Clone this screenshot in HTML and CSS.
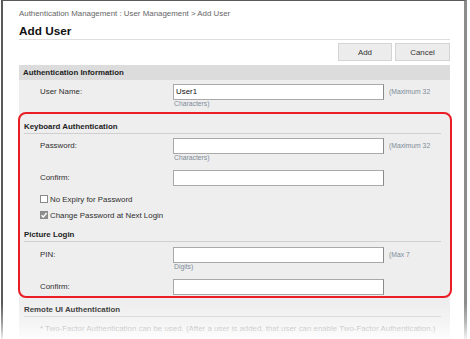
FILE: index.html
```html
<!DOCTYPE html>
<html>
<head>
<meta charset="utf-8">
<link rel="stylesheet" href="styles.css">
</head>
<body>
<div class="frame">
  <div class="page">
    <div class="crumb">Authentication Management : User Management &gt; Add User</div>
    <h1 class="title">Add User</h1>
    <div class="toolbar">
      <button class="btn btn-add">Add</button>
      <button class="btn btn-cancel">Cancel</button>
    </div>
    <div class="panel">
      <div class="bar">Authentication Information</div>
      <div class="row row-first">
        <span class="label">User Name:</span>
        <div class="field"><div class="input">User1</div><div class="sub">Characters)</div></div>
        <span class="hint">(Maximum 32</span>
      </div>
      <div class="highlight">
        <div class="subhead">Keyboard Authentication</div>
        <div class="row row-a">
          <span class="label">Password:</span>
          <div class="field"><div class="input"></div><div class="sub">Characters)</div></div>
          <span class="hint">(Maximum 32</span>
        </div>
        <div class="row row-b">
          <span class="label">Confirm:</span>
          <div class="field"><div class="input"></div></div>
        </div>
        <div class="check check-first">
          <span class="box"></span><span>No Expiry for Password</span>
        </div>
        <div class="check">
          <span class="box box-on"><svg viewBox="0 0 8 8" width="8" height="8"><path d="M1.5 4.2 L3.3 6 L6.6 2" fill="none" stroke="#fff" stroke-width="1.3"/></svg></span><span>Change Password at Next Login</span>
        </div>
        <div class="subhead subhead-pic">Picture Login</div>
        <div class="row row-pin">
          <span class="label">PIN:</span>
          <div class="field"><div class="input"></div><div class="sub">Digits)</div></div>
          <span class="hint">(Max 7</span>
        </div>
        <div class="row row-b row-last">
          <span class="label">Confirm:</span>
          <div class="field"><div class="input"></div></div>
        </div>
      </div>
      <div class="subhead subhead-out">Remote UI Authentication</div>
      <div class="note">* Two-Factor Authentication can be used. (After a user is added, that user can enable Two-Factor Authentication.)</div>
    </div>
  </div>
</div>
<div class="fade"></div>
</body>
</html>
```
FILE: styles.css
```css
html, body {
  margin: 0;
  padding: 0;
  background: #fff;
}
body {
  width: 470px;
  height: 339px;
  overflow: hidden;
  position: relative;
  font-family: "Liberation Sans", Arial, sans-serif;
  font-size: 7.9px;
  color: #2e2e2e;
}
.frame {
  margin-left: 1px;
  width: 461px;
  height: 339px;
  border-top: 1px solid #5a5a5a;
  border-left: 2px solid #5a5a5a;
  border-right: 3px solid #8c8c8c;
  box-sizing: content-box;
  overflow: hidden;
}
.page {
  padding-left: 16px;
  width: 431px;
}
.crumb {
  margin-top: 7px;
  height: 12px;
  line-height: 12px;
  color: #666;
  white-space: nowrap;
}
.title {
  margin: 1px 0 0;
  padding-top: 3px;
  line-height: 15px;
  height: 15px;
  font-size: 11.8px;
  font-weight: bold;
  color: #111;
  border-bottom: 1px solid #dedede;
}
.toolbar {
  margin-top: 3px;
  display: flex;
  justify-content: flex-end;
  gap: 3px;
}
.btn {
  height: 18px;
  padding: 0;
  margin: 0;
  background: #ececec;
  border: 1px solid #d4d4d4;
  font-family: inherit;
  font-size: 7.9px;
  color: #333;
}
.btn-add { width: 54px; }
.btn-cancel { width: 55px; }
.panel {
  margin-top: 4px;
  background: #eeeeee;
  padding-bottom: 20px;
}
.bar {
  height: 15px;
  line-height: 15px;
  padding-left: 4px;
  background: #dcdcdc;
  font-weight: bold;
  color: #222;
}
.row {
  display: grid;
  grid-template-columns: 128px 211px auto;
  column-gap: 5px;
  align-items: start;
  padding-left: 21px;
}
.label {
  line-height: 16px;
}
.input {
  height: 16px;
  box-sizing: border-box;
  background: #fff;
  border: 1px solid #a9a9a9;
  border-right-color: #8a8a8a;
  line-height: 14px;
  padding-left: 2px;
  color: #111;
}
.sub {
  height: 8px;
  line-height: 8px;
  padding-left: 1px;
  font-size: 6.8px;
  color: #7f8c99;
}
.hint {
  line-height: 16px;
  font-size: 6.8px;
  color: #7f8c99;
}
.row-first { margin-top: 4px; }
.highlight {
  margin: 4px -2px 0 -1px;
  border: 2px solid #ea1c24;
  border-radius: 8px;
  padding-bottom: 1px;
}
.highlight .row {
  padding-left: 20px;
  grid-template-columns: 128px 211px auto;
}
.subhead {
  margin: 0 9px 0 4px;
  padding-top: 7px;
  line-height: 12px;
  font-weight: bold;
  color: #222;
  border-bottom: 1px solid #cfcfcf;
}
.row-a { margin-top: 4px; }
.row-b { margin-top: 8px; }
.check {
  display: flex;
  align-items: center;
  gap: 2px;
  padding-left: 20px;
  height: 14px;
  margin-top: 2px;
}
.check-first { margin-top: 6px; }
.box {
  width: 8px;
  height: 8px;
  box-sizing: border-box;
  border: 1px solid #8a8a8a;
  background: #fff;
  display: flex;
}
.box-on {
  background: #8e8e8e;
}
.box-on svg { display: block; margin: -1px; }
.subhead-pic { padding-top: 7px; }
.row-pin { margin-top: 5px; }
.row-last { margin-top: 8px; }
.subhead-out {
  margin-left: 5px;
  padding-top: 6px;
}
.note {
  margin-top: 7px;
  padding-left: 21px;
  line-height: 10px;
  color: #8a8a8a;
  white-space: nowrap;
}
.fade {
  position: absolute;
  left: 0;
  right: 0;
  bottom: 0;
  height: 36px;
  background: linear-gradient(to bottom, rgba(255,255,255,0) 0%, rgba(255,255,255,0.4) 55%, rgba(255,255,255,0.9) 100%);
  pointer-events: none;
}
```
